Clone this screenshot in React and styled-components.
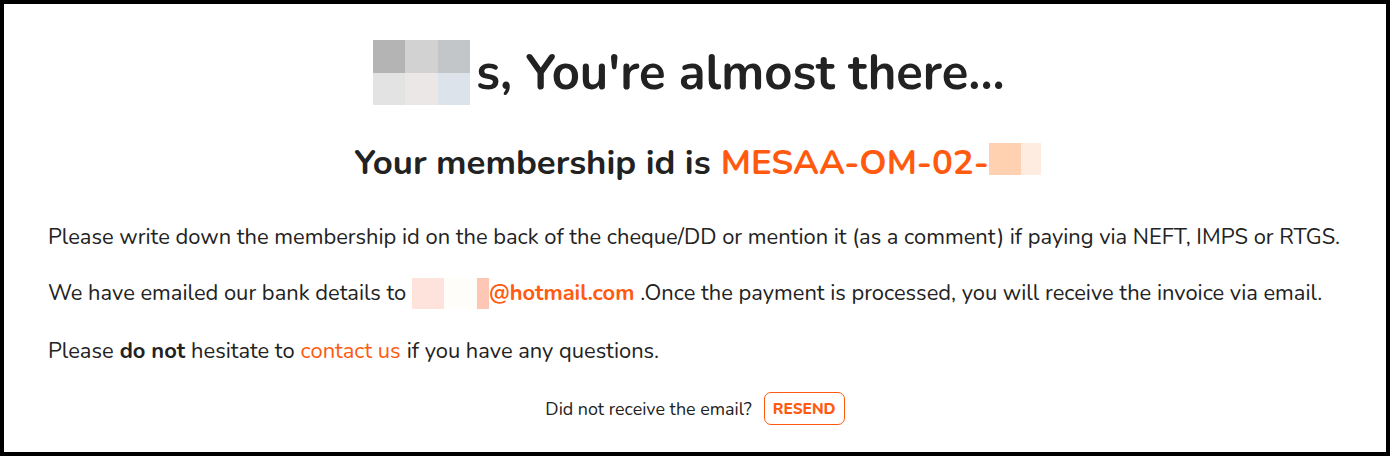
import React from 'react';
import styled, { createGlobalStyle } from 'styled-components';

const GlobalStyle = createGlobalStyle`
  html, body {
    margin: 0;
    padding: 0;
    background: #ffffff;
  }
  body {
    font-family: Nunito, Lato, "Open Sans", sans-serif;
    color: #222222;
  }
`;

const ORANGE = '#ff5a0f';

const Frame = styled.div`
  box-sizing: border-box;
  width: 1390px;
  height: 456px;
  border: 4px solid #000;
  background: #fff;
  padding: 36px 44px 0 44px;
  display: flex;
  flex-direction: column;
  align-items: stretch;
`;

const Title = styled.h1`
  margin: 0;
  padding-right: 12px;
  display: flex;
  align-items: center;
  justify-content: center;
  font-size: 49px;
  font-weight: 700;
  line-height: 65px;
  height: 65px;
  color: #222;
`;

const SubTitle = styled.h2`
  margin: 32px 0 0 0;
  padding-left: 5px;
  display: flex;
  align-items: center;
  justify-content: center;
  font-size: 34.8px;
  font-weight: 700;
  line-height: 44px;
  height: 44px;
  color: #222;
`;

const Words = styled.span`
  margin-top: 8px;
  color: ${({ accent }) => (accent ? ORANGE : 'inherit')};
  margin-left: ${({ accent }) => (accent ? 10 : 0)}px;
`;

/* pixelated redaction blocks */
const Mosaic = styled.span`
  display: inline-grid;
  grid-template-columns: ${({ cols }) => cols};
  grid-auto-rows: ${({ rowHeight }) => rowHeight}px;
  margin-right: ${({ gap }) => gap || 0}px;
  vertical-align: middle;
`;

const Tile = styled.span`
  display: block;
  background: ${({ color }) => color};
`;

const Text = styled.p`
  margin: ${({ top }) => top}px 0 0 0;
  font-size: 21.9px;
  line-height: 30px;
  height: 30px;
  display: flex;
  align-items: center;
  white-space: nowrap;
`;

const Email = styled.span`
  color: ${ORANGE};
  font-weight: 700;
  margin-right: 6px;
`;

const Link = styled.a`
  color: ${ORANGE};
  text-decoration: none;
  margin: 0 6px;
`;

const Bold = styled.strong`
  font-weight: 700;
  margin: 0 6px;
`;

const ResendRow = styled.div`
  margin-top: 26px;
  display: flex;
  align-items: center;
  justify-content: center;
  gap: 12px;
  font-size: 17.9px;
`;

const ResendButton = styled.button`
  box-sizing: border-box;
  height: 33px;
  width: 81px;
  border: 1px solid ${ORANGE};
  border-radius: 7px;
  background: #fff;
  color: ${ORANGE};
  font-family: inherit;
  font-size: 15.5px;
  font-weight: 800;
  cursor: pointer;
  padding: 0;
`;

const nameTiles = ['#b4b4b4', '#d2d2d2', '#c3c6c9', '#e3e3e3', '#ebe7e7', '#dce3eb'];
const idTiles = ['#ffd1b0', '#feece0'];
const emailTiles = ['#fee3dc', '#fffdf9', '#fec6b4'];

export default function App() {
  return (
    <>
      <GlobalStyle />
      <Frame>
        <Title>
          <Mosaic cols="32px 33px 32px" rowHeight={32.5} gap={6}>
            {nameTiles.map((c, i) => <Tile key={i} color={c} />)}
          </Mosaic>
          s, You're almost there...
        </Title>
        <SubTitle>
          <Words>Your membership id is</Words>
          <Words accent>MESAA-OM-02-</Words>
          <Mosaic cols="32px 20px" rowHeight={32}>
            {idTiles.map((c, i) => <Tile key={i} color={c} />)}
          </Mosaic>
        </SubTitle>
        <Text top={41}>
          Please write down the membership id on the back of the cheque/DD or mention it (as a comment) if paying via NEFT, IMPS or RTGS.
        </Text>
        <Text top={26}>
          We have emailed our bank details to&nbsp;
          <Mosaic cols="32px 33px 12px" rowHeight={31}>
            {emailTiles.map((c, i) => <Tile key={i} color={c} />)}
          </Mosaic>
          <Email>@hotmail.com</Email>
          .Once the payment is processed, you will receive the invoice via email.
        </Text>
        <Text top={28}>
          Please<Bold>do not</Bold>hesitate to<Link href="#">contact us</Link>if you have any questions.
        </Text>
        <ResendRow>
          Did not receive the email?
          <ResendButton>RESEND</ResendButton>
        </ResendRow>
      </Frame>
    </>
  );
}
